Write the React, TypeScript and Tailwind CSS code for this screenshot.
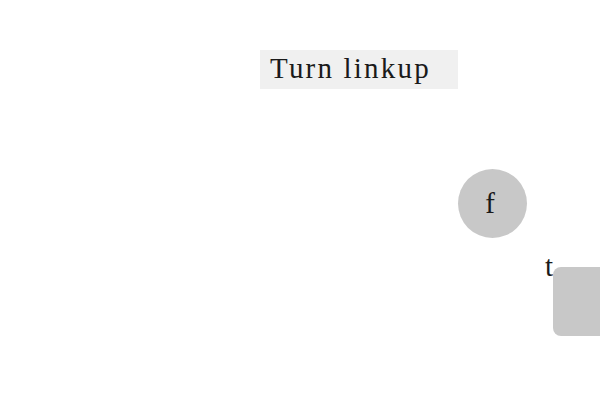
export default function App() {
  return (
    <div className="relative w-[600px] h-[400px] bg-white overflow-hidden" style={{ fontFamily: '"Liberation Serif", serif' }}>
      <div className="absolute left-[260px] top-[50px] w-[198px] h-[39px] bg-[#f0f0f0] pl-[10px] pt-[4px] text-[29px] tracking-[2.2px] text-[#1a1a1a] leading-[29px]">
        Turn linkup
      </div>
      <div className="absolute left-[458px] top-[169px] w-[69px] h-[69px] rounded-full bg-[#c8c8c8] flex items-center justify-center pr-[5px] text-[29px] text-[#1a1a1a] leading-none">
        f
      </div>
      <div className="absolute left-[545px] top-[252px] text-[29px] text-[#1a1a1a] leading-none">t</div>
      <div className="absolute left-[553px] top-[267px] w-[70px] h-[69px] rounded-[8px] bg-[#c8c8c8]" />
    </div>
  );
}
